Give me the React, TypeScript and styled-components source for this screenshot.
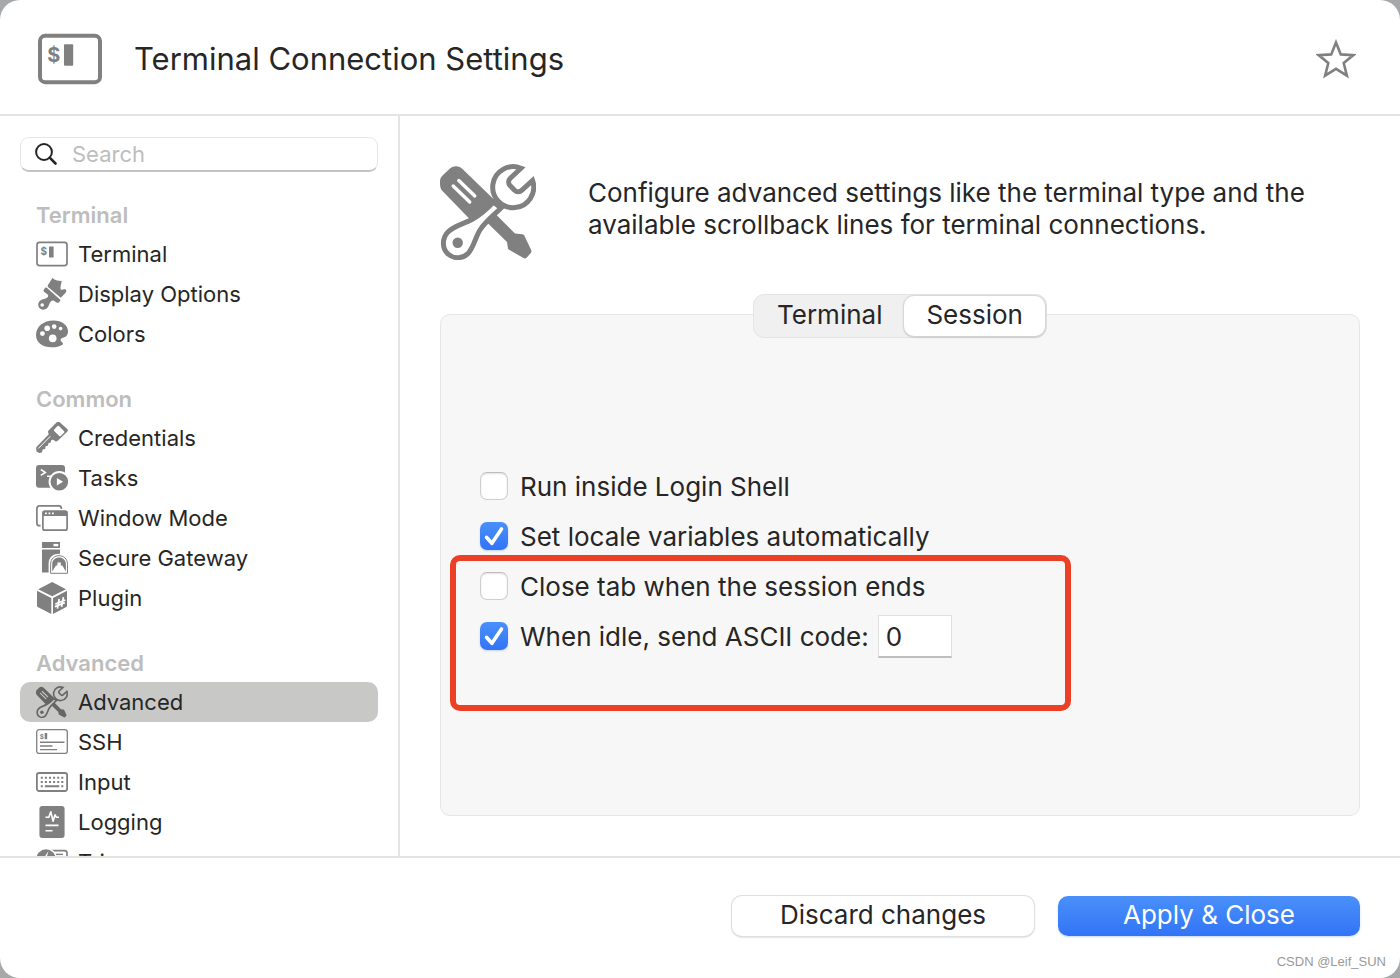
import React, { useState } from "react";
import styled, { createGlobalStyle, css } from "styled-components";

const ink = "#262626";
const gray = "#808080";
const rule = "#e4e4e4";

const GlobalStyle = createGlobalStyle`
  * { box-sizing: border-box; }
  html, body { margin: 0; }
  body {
    background: #a6a8aa;
    color: ${ink};
    font-family: Inter, "Liberation Sans", sans-serif;
  }
  button, input { font: inherit; color: inherit; }
`;

const Window = styled.div`
  --surface: #ffffff;
  position: relative;
  display: flex;
  flex-direction: column;
  height: 100vh;
  border-radius: 20px;
  background: #ffffff;
  overflow: hidden;
`;

const Header = styled.header`
  display: flex;
  align-items: center;
  gap: 32px;
  flex: none;
  height: 116px;
  padding: 4px 44px 0 38px;
  border-bottom: 2px solid ${rule};
`;

const Title = styled.h1`
  flex: 1;
  margin: 0;
  font-size: 31px;
  line-height: 40px;
  font-weight: 400;
`;

const IconButton = styled.button`
  display: flex;
  padding: 0;
  border: 0;
  background: none;
  color: ${gray};
`;

const Body = styled.div`
  display: flex;
  flex: 1;
  min-height: 0;
`;

const Sidebar = styled.aside`
  flex: none;
  width: 400px;
  padding: 21px 20px 0;
  border-right: 2px solid ${rule};
  overflow-y: auto;
  scrollbar-width: none;
`;

const SearchField = styled.label`
  display: flex;
  align-items: center;
  gap: 15px;
  height: 35px;
  padding: 0 14px;
  border: 1px solid #e6e6e6;
  border-bottom: 2px solid #c4c4c4;
  border-radius: 9px;
  background: #ffffff;
`;

const SearchInput = styled.input`
  flex: 1;
  min-width: 0;
  padding: 0;
  border: 0;
  outline: 0;
  background: none;
  font-size: 22px;
  line-height: 28px;
  &::placeholder { color: #bdbdbd; opacity: 1; }
`;

const Group = styled.section`
  margin-top: 24px;
  &:first-of-type { margin-top: 0; }
`;

const Nav = styled.nav`
  margin-top: 22px;
`;

const GroupTitle = styled.h2`
  margin: 0;
  padding: 2px 16px 0;
  font-size: 22px;
  line-height: 38px;
  font-weight: 600;
  color: #bdbdbd;
`;

const NavList = styled.ul`
  margin: 0;
  padding: 0;
  list-style: none;
`;

const NavLink = styled.a<{ $active?: boolean }>`
  display: flex;
  align-items: center;
  gap: 10px;
  height: 40px;
  padding: 0 16px;
  border-radius: 10px;
  font-size: 22px;
  line-height: 40px;
  color: ${ink};
  text-decoration: none;
  ${(p) => p.$active && css`
    --surface: #c8c8c6;
    background: #c8c8c6;
    svg { color: #666666; }
  `}
`;

const Icon = styled.svg<{ $size?: number }>`
  display: block;
  flex: none;
  width: ${(p) => p.$size ?? 32}px;
  height: ${(p) => p.$size ?? 32}px;
  color: ${gray};
`;

const Main = styled.main`
  display: flex;
  flex: 1;
  flex-direction: column;
  min-width: 0;
  padding: 48px 40px 40px;
`;

const Intro = styled.div`
  display: flex;
  align-items: center;
  gap: 52px;
`;

const IntroText = styled.p`
  margin: 0;
  padding-bottom: 6px;
  max-width: 740px;
  font-size: 26px;
  line-height: 32px;
`;

const Tabs = styled.div`
  position: relative;
  z-index: 1;
  display: flex;
  align-self: center;
  height: 44px;
  margin: 34px 0 -24px;
  padding: 1px;
  border: 1px solid #e4e4e4;
  border-radius: 11px;
  background: #f0f0f0;
`;

const Tab = styled.button<{ $active: boolean }>`
  padding: 0 22px 2px;
  border: 0;
  border-radius: 10px;
  background: ${(p) => (p.$active ? "#ffffff" : "transparent")};
  box-shadow: ${(p) => (p.$active ? "0 0 1px 1px #d8d8d8, 0 1px 2px #9a9a9a" : "none")};
  font-size: 26px;
  line-height: 36px;
`;

const Panel = styled.section`
  display: flex;
  flex: 1;
  flex-direction: column;
  justify-content: center;
  padding: 0 39px 6px;
  border: 1px solid #e6e6e6;
  border-radius: 10px;
  background: #f7f7f7;
`;

const Options = styled.div`
  position: relative;
`;

const Option = styled.div`
  display: flex;
  align-items: center;
  height: 50px;
  padding-bottom: 2px;
  font-size: 26px;
  line-height: 32px;
`;

const OptionLabel = styled.label`
  display: flex;
  align-items: center;
  gap: 12px;
`;

const OptionText = styled.span`
  padding-top: 2px;
`;

const Check = styled.span`
  position: relative;
  display: flex;
  width: 28px;
  height: 28px;
  svg {
    position: absolute;
    inset: 0;
    display: none;
    width: 28px;
    height: 28px;
    color: #ffffff;
    pointer-events: none;
  }
  input:checked + svg { display: block; }
`;

const CheckInput = styled.input`
  appearance: none;
  width: 28px;
  height: 28px;
  margin: 0;
  border: 1px solid #cfcfcf;
  border-top-color: #bdbdbd;
  border-radius: 7px;
  background: #ffffff;
  box-shadow: inset 0 1px 2px #e2e2e2;
  &:checked {
    border: 0;
    background: linear-gradient(#4a90fa, #3274f6);
    box-shadow: 0 1px 2px #c3d6f8;
  }
`;

const CodeInput = styled.input`
  width: 74px;
  height: 43px;
  margin-left: 9px;
  padding: 1px 7px 0;
  border: 1px solid #e0e0e0;
  border-bottom: 2px solid #bebebe;
  border-radius: 0;
  background: #ffffff;
  outline: 0;
`;

const Highlight = styled.div`
  position: absolute;
  top: 93px;
  left: -30px;
  width: 621px;
  height: 156px;
  border: 6px solid #eb4026;
  border-radius: 10px;
  pointer-events: none;
`;

const Footer = styled.footer`
  display: flex;
  align-items: flex-start;
  justify-content: flex-end;
  gap: 24px;
  flex: none;
  height: 122px;
  padding: 38px 40px 0;
  border-top: 2px solid ${rule};
`;

const ActionButton = styled.button<{ $primary?: boolean }>`
  width: 302px;
  height: 40px;
  padding: 0 0 2px;
  border: 0;
  border-radius: 10px;
  font-size: 26px;
  line-height: 38px;
  background: ${(p) => (p.$primary ? "linear-gradient(#4a90fa, #3274f6)" : "#ffffff")};
  color: ${(p) => (p.$primary ? "#ffffff" : ink)};
  box-shadow: ${(p) => (p.$primary ? "0 1px 2px #c3d6f8" : "0 0 0 1px #e0e0e0, 0 1px 2px #a8a8a8")};
`;

const Credit = styled.small`
  position: absolute;
  right: 14px;
  bottom: 7px;
  font-family: "Liberation Sans", Arial, sans-serif;
  font-size: 13px;
  line-height: 18px;
  color: #999999;
`;

const Dollar = ({ x, y, size }: { x: number; y: number; size: number }) => (
  <text x={x} y={y} fontSize={size} fontWeight={700} fill="currentColor">$</text>
);

const TerminalIcon = ({ size, weight = 2 }: { size?: number; weight?: number }) => (
  <Icon $size={size} viewBox="0 0 32 32" aria-hidden="true">
    <rect x="1" y="4.400" width="30" height="23.200" rx="2.600" fill="none" stroke="currentColor" strokeWidth={weight} />
    <Dollar x={4.6} y={17.4} size={10} />
    <rect x="13" y="8.600" width="4.600" height="10.800" rx=".5" fill="currentColor" />
  </Icon>
);

const BrushIcon = () => (
  <Icon viewBox="0 0 32 32" fill="currentColor" aria-hidden="true">
    <path d="M16.400 0c1.800 2.200 5.200 2.600 9.300 2.900-.6 3.400-1.600 6-1 8.600 1.700.8 3.300-1.200 5.100.1.800.7.700 2.100-.2 3.100L24.800 19.800 12 9c-.5-.5-.3-1.300 0-2z" />
    <path d="M10.800 9.800 24 21.400c.5.500.5 1.200 0 1.800l-1.300 1.200c-.6.500-1.400.5-2.200 0l-2.200-1.500c-1.200-.8-2.300-.5-3.300.4-2 1.800-2 5.500-4.300 7.300-2.400 1.900-5.700 1.300-7.500-.8-1.700-2.300-1.200-5.600 1.200-7.300 2.200-1.500 5-1.300 6.900-2.900 1-.9 1.200-2 .4-3.200L8 13.800c-.7-1-.6-1.700.1-2.500l1.100-1.300c.5-.6 1.100-.6 1.600-.2z" />
    <circle cx="6.200" cy="27" r="1.800" fill="var(--surface)" />
  </Icon>
);

const PaletteIcon = () => (
  <Icon viewBox="0 0 32 32" fill="currentColor" aria-hidden="true">
    <path d="M17.500 2.400C7.500 2.400 0 8.500 0 17c0 7.600 6.800 12.300 15.500 12.300 4.500 0 8.500-1 11-2.600 1.200-.9.300-2-.7-2.800-1.300-1-1.600-2.300-.6-3.400 1.300-1.200 3.500-.8 5-2.300 1.200-1.200 1.800-2.900 1.800-5 0-6-6-10.800-14.500-10.800z" />
    <g fill="var(--surface)">
      <circle cx="6.400" cy="15.600" r="2.400" />
      <circle cx="11.200" cy="10.300" r="2.800" />
      <circle cx="18.200" cy="8.600" r="2.300" />
      <circle cx="24.600" cy="10.600" r="1.800" />
      <circle cx="16.700" cy="20.400" r="3.800" />
    </g>
  </Icon>
);

const KeyIcon = () => (
  <Icon viewBox="0 0 32 32" fill="currentColor" aria-hidden="true">
    <path d="M13 12 1.200 24.200C.1 25.300 0 26 .2 27.200L.6 29.500l2.600 1.600 2.700-.5.800-3.100 2.400-.6.500-2.600 2.300-.6.500-2.500 2.300-.6.500-2.300 3-1.300z" />
    <path d="M20.500.5 12.800 8.200c-.9.900-.9 1.700-.5 2.900l1.500 3.600c.3.800.7 1.200 1.500 1.500l4 3c1.100.4 1.900.2 2.700-.6l9-8.600c1.200-1.100 1.200-2 .3-3L24.300.7c-1.200-1.100-2.500-1.300-3.800-.2z" />
    <rect x="18.600" y="5.700" width="9.200" height="6.800" rx="1" transform="rotate(45 23.200 9)" fill="var(--surface)" />
    <path d="M14.300 14.300 2.300 26.500" stroke="var(--surface)" strokeWidth="1" />
  </Icon>
);

const TasksIcon = () => (
  <Icon viewBox="0 0 32 32" aria-hidden="true">
    <rect y="3" width="29" height="22.800" rx="3" fill="currentColor" />
    <path d="m4.800 7.500 4.500 2.900-4.500 2.900M11 14.200h5" fill="none" stroke="var(--surface)" strokeWidth="1.600" />
    <circle cx="23.300" cy="19.700" r="10.700" fill="var(--surface)" />
    <circle cx="23.300" cy="19.700" r="8.800" fill="currentColor" />
    <path d="m20.900 16.100 6.200 3.700-6.200 3.700z" fill="var(--surface)" />
  </Icon>
);

const WindowsIcon = () => (
  <Icon viewBox="0 0 32 32" aria-hidden="true">
    <rect x=".9" y="3.900" width="24.500" height="19.800" rx="2.500" fill="none" stroke="currentColor" strokeWidth="1.700" />
    <rect x="4.600" y="7" width="27.400" height="23" rx="3" fill="var(--surface)" />
    <rect x="6.900" y="9.200" width="24.200" height="19" rx="2" fill="none" stroke="currentColor" strokeWidth="1.700" />
    <path d="M7 9h24v5H7z" fill="currentColor" />
    <path d="M9 11.400h1.800m1.700 0h1.800m1.700 0h1.800" stroke="var(--surface)" strokeWidth="1.800" />
  </Icon>
);

const GatewayIcon = () => (
  <Icon viewBox="0 0 32 32" aria-hidden="true">
    <path d="M6 0h18v6H6zM6 7.600h18v22.800H6z" fill="currentColor" />
    <path d="M17.500 1.900h4.800v2.400h-4.800z" fill="var(--surface)" />
    <path d="M12.600 32V21.500c0-13 20.400-13 20.400 0V32z" fill="var(--surface)" />
    <path d="M14.600 31.300v-9c0-11.500 16.900-11.500 16.900 0v9z" fill="none" stroke="currentColor" strokeWidth="1" />
    <path d="M16.200 29.500v-7.200c0-9 13.700-9 13.700 0v7.200l-3.600-6h-1.500v-3h-3.400v3h-1.500z" fill="currentColor" />
  </Icon>
);

const CubeIcon = () => (
  <Icon viewBox="0 0 32 32" fill="currentColor" aria-hidden="true">
    <path d="M16.200 0 30 7.300 16.200 14.200 2.200 7.300zM1 8.800l14.300 7.100v16L2.200 25.200C1.300 24.700 1 24.300 1 23.400zM31 8.800l-14 7.100v16l12.800-6.700c.9-.5 1.200-.9 1.200-1.800z" />
    <path d="m23.200 17-1.800 9.600m6-11.400-1.800 9.600M19.300 22l10-4m-10.500 6.600 10-4" fill="none" stroke="var(--surface)" strokeWidth="1.700" />
  </Icon>
);

const ToolsIcon = ({ size }: { size?: number }) => (
  <Icon $size={size} viewBox="0 0 96 96" aria-hidden="true">
    <path d="M0 19c0-4 .5-5.500 3-8l7-6.500c4-3 9-3 13 1L54.500 36 33.500 59 2.500 27C.5 25 0 23 0 19zM52 46.500 75 69.500l7.500.8c1 .2 1.500.7 2 1.700l6.700 14c.5 1.200.4 2-.4 3l-4 4.500c-1 1-2 1.200-3.300.5L69.500 86c-1-.6-1.500-1-1.600-2.200L67 78 43 54.500z" fill="currentColor" />
    <path d="m18.800 16.600 16 15.300M13.200 22l16.500 16" stroke="var(--surface)" strokeWidth="3.400" strokeLinecap="round" />
    <path d="M53.500 38C46 46 40 51 32 55.500 22 60.500 14 62 8 68c-6.300 6.500-6 17 0 22 6 5.500 15 4.500 20-.5C34 83 35 74 40 66c5-8 14-15 21-22z" fill="var(--surface)" stroke="currentColor" strokeWidth="5" />
    <path d="M81 4.200 70.300 14.300c-2 2-2.300 5-.3 7.200l4.600 4.700c2.200 2.200 5.200 2 7.400 0L92.600 16.500A20.500 20.500 0 1 1 81 4.200z" fill="var(--surface)" stroke="currentColor" strokeWidth="5" />
    <circle cx="17.700" cy="78.700" r="5.200" fill="currentColor" />
  </Icon>
);

const SshIcon = () => (
  <Icon viewBox="0 0 32 32" aria-hidden="true">
    <rect x=".7" y="3.700" width="30.600" height="23.700" rx="2.500" fill="none" stroke="currentColor" strokeWidth="1.300" />
    <Dollar x={3.8} y={12.7} size={6.5} />
    <path d="M8.700 7h2.500v6.200H8.700z" fill="currentColor" />
    <path d="M4 16.300h24.500M4 20h12.500M4 23.600h17" stroke="currentColor" strokeWidth="1.400" />
  </Icon>
);

const KeyboardIcon = () => (
  <Icon viewBox="0 0 32 32" fill="none" stroke="currentColor" aria-hidden="true">
    <rect x=".9" y="7" width="30.200" height="18" rx="2.200" strokeWidth="1.800" />
    <path d="M4.800 11.700h23M4.800 16h23" strokeWidth="2" strokeDasharray="2 2.100" />
    <path d="M4.800 20.200h2M8.900 20.200h14.300M25.300 20.200h2" strokeWidth="2" />
  </Icon>
);

const LogIcon = () => (
  <Icon viewBox="0 0 32 32" aria-hidden="true">
    <rect x="3.400" width="25.200" height="32" rx="3" fill="currentColor" />
    <path d="M9.500 11.200h3.300l2-5.500 2.300 9.600 1.900-6.600 1.200 2.500H23M9.500 19.400h13M9.500 24.700h7" fill="none" stroke="var(--surface)" strokeWidth="1.600" strokeLinejoin="round" />
  </Icon>
);

const TriggerIcon = () => (
  <Icon viewBox="0 0 32 32" aria-hidden="true">
    <rect x="6" y="4.600" width="25" height="22" rx="2.500" fill="none" stroke="currentColor" strokeWidth="1.700" />
    <circle cx="10" cy="13" r="11" fill="var(--surface)" />
    <circle cx="10" cy="13" r="9.700" fill="currentColor" />
    <path d="m12.500 5-6 9h4l-2 7 6-9h-4z" fill="var(--surface)" />
    <path d="M20 8.400h7" stroke="currentColor" strokeWidth="1.400" />
  </Icon>
);

const StarIcon = () => (
  <Icon $size={40} viewBox="0 0 40 40" fill="none" stroke="currentColor" strokeWidth="2.600" aria-hidden="true">
    <path d="m20 3.400 4.800 12 12.600.7-9.700 8 3.200 12.500L20 29.800 9.100 36.600l3.200-12.500-9.700-8 12.600-.7z" />
  </Icon>
);

const SearchIcon = () => (
  <svg width="22" height="22" viewBox="0 0 22 22" fill="none" stroke={ink} aria-hidden="true">
    <circle cx="9" cy="9" r="7.900" strokeWidth="2" />
    <path d="m14.700 14.700 5.800 5.800" strokeWidth="2.600" strokeLinecap="round" />
  </svg>
);

const CheckMark = () => (
  <svg viewBox="0 0 28 28" fill="none" stroke="currentColor" strokeWidth="3.600" strokeLinecap="round" strokeLinejoin="round" aria-hidden="true">
    <path d="m6.500 15.300 5.400 6L21.500 7" />
  </svg>
);

const groups = [
  {
    title: "Terminal",
    items: [
      { label: "Terminal", icon: <TerminalIcon weight={1.7} /> },
      { label: "Display Options", icon: <BrushIcon /> },
      { label: "Colors", icon: <PaletteIcon /> },
    ],
  },
  {
    title: "Common",
    items: [
      { label: "Credentials", icon: <KeyIcon /> },
      { label: "Tasks", icon: <TasksIcon /> },
      { label: "Window Mode", icon: <WindowsIcon /> },
      { label: "Secure Gateway", icon: <GatewayIcon /> },
      { label: "Plugin", icon: <CubeIcon /> },
    ],
  },
  {
    title: "Advanced",
    items: [
      { label: "Advanced", icon: <ToolsIcon /> },
      { label: "SSH", icon: <SshIcon /> },
      { label: "Input", icon: <KeyboardIcon /> },
      { label: "Logging", icon: <LogIcon /> },
      { label: "Triggers", icon: <TriggerIcon /> },
    ],
  },
];

function CheckOption({ label, checked, children }: { label: string; checked?: boolean; children?: React.ReactNode }) {
  return (
    <Option>
      <OptionLabel>
        <Check>
          <CheckInput type="checkbox" defaultChecked={checked} />
          <CheckMark />
        </Check>
        <OptionText>{label}</OptionText>
      </OptionLabel>
      {children}
    </Option>
  );
}

export default function App() {
  const [tab, setTab] = useState("Session");
  const [page, setPage] = useState("Advanced");

  return (
    <>
      <GlobalStyle />
      <Window>
        <Header>
          <TerminalIcon size={64} />
          <Title>Terminal Connection Settings</Title>
          <IconButton type="button" aria-label="Add to favorites"><StarIcon /></IconButton>
        </Header>
        <Body>
          <Sidebar>
            <SearchField>
              <SearchIcon />
              <SearchInput type="search" placeholder="Search" aria-label="Search" />
            </SearchField>
            <Nav>
              {groups.map((group) => (
                <Group key={group.title}>
                  <GroupTitle>{group.title}</GroupTitle>
                  <NavList>
                    {group.items.map((item) => (
                      <li key={item.label}>
                        <NavLink href="#" $active={item.label === page} onClick={() => setPage(item.label)}>
                          {item.icon}
                          {item.label}
                        </NavLink>
                      </li>
                    ))}
                  </NavList>
                </Group>
              ))}
            </Nav>
          </Sidebar>
          <Main>
            <Intro>
              <ToolsIcon size={96} />
              <IntroText>
                Configure advanced settings like the terminal type and the available scrollback lines for terminal connections.
              </IntroText>
            </Intro>
            <Tabs role="tablist">
              {["Terminal", "Session"].map((name) => (
                <Tab key={name} type="button" role="tab" aria-selected={tab === name} $active={tab === name} onClick={() => setTab(name)}>
                  {name}
                </Tab>
              ))}
            </Tabs>
            <Panel>
              <Options>
                <CheckOption label="Run inside Login Shell" />
                <CheckOption label="Set locale variables automatically" checked />
                <CheckOption label="Close tab when the session ends" />
                <CheckOption label="When idle, send ASCII code:" checked>
                  <CodeInput type="text" defaultValue="0" aria-label="ASCII code" />
                </CheckOption>
                <Highlight />
              </Options>
            </Panel>
          </Main>
        </Body>
        <Footer>
          <ActionButton type="button">Discard changes</ActionButton>
          <ActionButton type="button" $primary>Apply &amp; Close</ActionButton>
        </Footer>
        <Credit>CSDN @Leif_SUN</Credit>
      </Window>
    </>
  );
}
